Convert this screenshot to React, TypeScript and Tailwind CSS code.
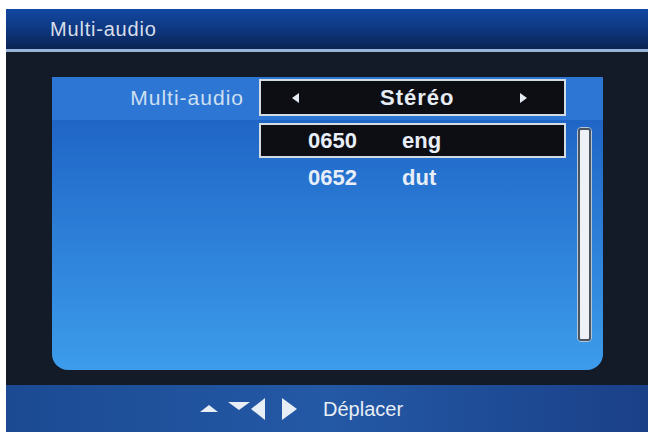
export default function App() {
  return (
    <div className="w-[648px] h-[432px] overflow-hidden bg-white pt-[9px] pl-[6px] font-['Liberation_Sans',Arial,sans-serif]">
      <div className="flex h-full flex-col">
        {/* Title bar */}
        <header className="flex h-[40px] items-center bg-gradient-to-b from-[#1248a2] via-[#0e3780] to-[#0a2454] pl-[44px]">
          <span className="text-[20px] leading-none tracking-[0.8px] text-[#d8dfea]">Multi-audio</span>
        </header>
        <div className="h-[3px] bg-[#9ab3d8]" />

        {/* Body */}
        <main className="flex-1 bg-[#131b28] pt-[25px] pr-[45px] pb-[15px] pl-[46px]">
          <div className="flex h-full flex-col overflow-hidden rounded-b-[16px] bg-gradient-to-b from-[#1c5cc0] to-[#3d9ceb]">
            {/* Selector row */}
            <div className="flex h-[43px] items-start bg-[#2e76d4] pt-[2px]">
              <div className="flex h-[37px] w-[207px] items-center justify-end pr-[15px] text-[21px] tracking-[1px] text-[#cfe0f2]">
                Multi-audio
              </div>
              <div className="flex h-[37px] w-[307px] items-center border-2 border-[#d3dbe3] bg-[#0d0e14] pl-[31px] text-[#e6ecf4]">
                <Tri dir="left" />
                <span className="ml-[81px] text-[22px] font-bold tracking-[1px]">Stéréo</span>
                <span className="ml-auto mr-[37px]">
                  <Tri dir="right" />
                </span>
              </div>
            </div>

            {/* Track list */}
            <div className="flex pt-[3px]">
              <div className="w-[207px]" />
              <div className="flex w-[307px] flex-col gap-[2px] text-[22px] font-bold text-[#e8eef8]">
                <div className="flex h-[35px] items-center border-2 border-[#d3dbe3] bg-[#0d0e14] pl-[47px]">
                  <span className="w-[94px]">0650</span>
                  <span>eng</span>
                </div>
                <div className="flex h-[35px] items-center border-2 border-transparent pl-[47px]">
                  <span className="w-[94px]">0652</span>
                  <span>dut</span>
                </div>
              </div>
              <div className="ml-[11px] mt-[4px] h-[215px] w-[15px] rounded-[4px] border border-[#b4c6d8] p-0">
                <div className="h-full w-full rounded-[3px] border-2 border-[#4a5562] bg-[#eef2f6]" />
              </div>
            </div>
          </div>
        </main>

        {/* Footer help bar */}
        <footer className="flex h-[47px] items-center bg-gradient-to-r from-[#1b4a92] via-[#2459a6] to-[#1a4088] pl-[194px]">
          <svg width="98" height="24" viewBox="0 0 98 24" className="shrink-0">
            <polygon points="0,15 18,15 9,8" fill="#e8eef6" />
            <polygon points="28,5 50,5 39,13" fill="#e8eef6" />
            <polygon points="65,1 65,23 51,12" fill="#e8eef6" />
            <polygon points="82,1 82,23 97,12" fill="#e8eef6" />
          </svg>
          <span className="ml-[25px] text-[20px] leading-none text-[#e8eef6]">Déplacer</span>
        </footer>
      </div>
    </div>
  );
}

function Tri({ dir }: { dir: "left" | "right" }) {
  return (
    <svg width="7" height="10" viewBox="0 0 7 10" className="block">
      {dir === "left" ? (
        <polygon points="7,0 7,10 0,5" fill="#e6ecf4" />
      ) : (
        <polygon points="0,0 0,10 7,5" fill="#e6ecf4" />
      )}
    </svg>
  );
}
